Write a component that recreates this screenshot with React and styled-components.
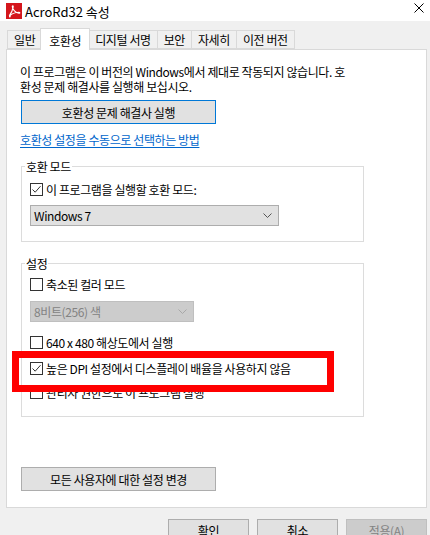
import React from 'react'
import styled, { createGlobalStyle } from 'styled-components'

const GlobalStyle = createGlobalStyle`
    html, body{
        margin: 0;
        padding: 0;
        background: #f0f0f0;
    }
    body{
        font-family: "Noto Sans CJK KR", "Noto Sans", "Liberation Sans", sans-serif;
        font-size: 12px;
        color: #000;
    }
    *{
        box-sizing: border-box;
    }
`

const Window = styled.div`
    position: relative;
    width: 430px;
    height: 535px;
    overflow: hidden;
    background: #f0f0f0;
    letter-spacing: -0.4px;
`

const TitleBar = styled.div`
    height: 21px;
    flex-shrink: 0;
    background: #fff;
    display: flex;
    align-items: center;
    padding: 0 6px;
    .title{
        margin-left: 3px;
        font-size: 13px;
        letter-spacing: 0;
        line-height: 15px;
        margin-top: 1px;
    }
    .close{
        margin-left: auto;
        margin-top: -6px;
    }
`

const Body = styled.div`
    padding: 0 3px 0 6px;
    display: flex;
    flex-direction: column;
    > *{ flex-shrink: 0; }
`

const TabStrip = styled.div`
    margin-top: 7px;
    height: 21px;
    display: flex;
    align-items: flex-end;
    padding-left: 1px;
    position: relative;
    z-index: 1;
`

const Tab = styled.div`
    height: ${p => (p.$active ? '22px' : '19px')};
    margin-bottom: ${p => (p.$active ? '-1px' : '0')};
    margin-left: ${p => (p.$active ? '-2px' : '-1px')};
    margin-right: ${p => (p.$active ? '-1px' : '0')};
    &:first-child{ margin-left: 0; }
    padding: 0 ${p => (p.$active ? '8px' : '6px')};
    padding-top: ${p => (p.$active ? '1px' : '0')};
    background: ${p => (p.$active ? '#fff' : '#f0f0f0')};
    border: 1px solid #d9d9d9;
    border-bottom: ${p => (p.$active ? 'none' : '1px solid #d9d9d9')};
    display: flex;
    align-items: center;
    line-height: 15px;
    white-space: nowrap;
    position: relative;
    z-index: ${p => (p.$active ? 2 : 1)};
`

const Panel = styled.div`
    height: 459px;
    background: #fff;
    border: 1px solid #d9d9d9;
    padding: 14px 13px 16px 13px;
    display: flex;
    flex-direction: column;
    align-items: flex-start;
    > *{ flex-shrink: 0; }
`

const Intro = styled.p`
    margin: 0;
    line-height: 15px;
`

const PushButton = styled.button`
    font: inherit;
    letter-spacing: inherit;
    color: #000;
    width: 195px;
    height: 24px;
    margin-top: ${p => (p.$pushDown ? 'auto' : `${p.$top || 0}px`)};
    margin-left: 1px;
    background: #e1e1e1;
    border: 1px solid ${p => (p.$default ? '#0078d7' : '#adadad')};
    padding: 0;
    line-height: 15px;
`

const HelpLink = styled.a`
    margin-top: 8px;
    line-height: 15px;
    color: #0066cc;
    text-decoration: underline;
    text-underline-offset: 2px;
`

const Group = styled.fieldset`
    margin: ${p => p.$top}px 0 0 1px;
    width: 343px;
    border: 1px solid #dcdcdc;
    padding: 0 8px ${p => p.$bottom}px 8px;
    min-width: 0;
    display: flex;
    flex-direction: column;
    align-items: flex-start;
    legend{
        padding: 0 1px;
        margin-left: -5px;
        line-height: 15px;
    }
`

const CheckRow = styled.label`
    display: flex;
    align-items: center;
    gap: 3px;
    height: 15px;
    line-height: 15px;
    margin-top: ${p => p.$top}px;
    white-space: nowrap;
`

const Box = styled.span`
    width: 13px;
    height: 13px;
    border: 1px solid #333;
    background: #fff;
    display: flex;
    align-items: center;
    justify-content: center;
    flex-shrink: 0;
`

const Select = styled.div`
    width: ${p => p.$width}px;
    height: 21px;
    margin-top: ${p => p.$top}px;
    background: ${p => (p.$disabled ? '#cccccc' : '#e1e1e1')};
    border: 1px solid ${p => (p.$disabled ? '#bfbfbf' : '#adadad')};
    color: ${p => (p.$disabled ? '#838383' : '#000')};
    display: flex;
    align-items: center;
    justify-content: space-between;
    padding: 0 6px 0 3px;
    line-height: 15px;
`

const Footer = styled.div`
    display: flex;
    justify-content: flex-end;
    gap: 8px;
    margin-top: 11px;
`

const DialogButton = styled.button`
    font: inherit;
    letter-spacing: inherit;
    width: 81px;
    height: 23px;
    padding: 0;
    background: ${p => (p.disabled ? '#cccccc' : '#e1e1e1')};
    border: 1px solid ${p => (p.disabled ? '#bfbfbf' : '#adadad')};
    color: ${p => (p.disabled ? '#838383' : '#000')};
    line-height: 15px;
`

const Highlight = styled.div`
    position: absolute;
    left: 12px;
    top: 351px;
    width: 322px;
    height: 41px;
    border: 7px solid #ff0000;
    pointer-events: none;
`

const Check = ({ checked }) => (
    <Box>
        {checked && (
            <svg width="11" height="11" viewBox="0 0 11 11">
                <path d="M1.5 5.5 L4.2 8.2 L9.5 2.2" fill="none" stroke="#333" strokeWidth="1" />
            </svg>
        )}
    </Box>
)

const Chevron = ({ color }) => (
    <svg width="9" height="5" viewBox="0 0 9 5">
        <path d="M0.5 0.5 L4.5 4.5 L8.5 0.5" fill="none" stroke={color} strokeWidth="1" />
    </svg>
)

const AcrobatIcon = () => (
    <svg width="16" height="16" viewBox="0 0 16 16">
        <rect x="0" y="0" width="16" height="16" fill="#d4161c" />
        <path
            d="M3.2 12.8 C5 10.5 6.8 6.5 7.2 3.8 C7.4 2.4 6.2 2.3 6.3 3.8 C6.5 6.4 9.6 9.8 12.8 10.3 C14.2 10.5 14.2 9.2 12.8 9.3 C9.8 9.5 5.3 11.2 3.8 12.9 C3.1 13.7 3.8 14.3 4.6 13.4"
            fill="none"
            stroke="#fff"
            strokeWidth="1.1"
        />
    </svg>
)

const CloseIcon = () => (
    <svg className="close" width="10" height="10" viewBox="0 0 10 10">
        <path d="M0.5 0.5 L9.5 9.5 M9.5 0.5 L0.5 9.5" stroke="#000" strokeWidth="1" />
    </svg>
)

const tabs = ['일반', '호환성', '디지털 서명', '보안', '자세히', '이전 버전']

const App = () => {
    return (
        <>
            <GlobalStyle />
            <Window>
                <TitleBar>
                    <AcrobatIcon />
                    <span className="title">AcroRd32 속성</span>
                    <CloseIcon />
                </TitleBar>
                <Body>
                    <TabStrip>
                        {tabs.map(t => (
                            <Tab key={t} $active={t === '호환성'}>{t}</Tab>
                        ))}
                    </TabStrip>
                    <Panel>
                        <Intro>
                            이 프로그램은 이 버전의 Windows에서 제대로 작동되지 않습니다. 호<br />
                            환성 문제 해결사를 실행해 보십시오.
                        </Intro>
                        <PushButton $default $top={6}>호환성 문제 해결사 실행</PushButton>
                        <HelpLink>호환성 설정을 수동으로 선택하는 방법</HelpLink>

                        <Group $top={12} $bottom={15}>
                            <legend>호환 모드</legend>
                            <CheckRow $top={8}>
                                <Check checked />
                                이 프로그램을 실행할 호환 모드:
                            </CheckRow>
                            <Select $width={249} $top={8}>
                                <span>Windows 7</span>
                                <Chevron color="#555" />
                            </Select>
                        </Group>

                        <Group $top={14} $bottom={16}>
                            <legend>설정</legend>
                            <CheckRow $top={6}>
                                <Check />
                                축소된 컬러 모드
                            </CheckRow>
                            <Select $width={164} $top={9} $disabled>
                                <span>8비트(256) 색</span>
                                <Chevron color="#a8a8a8" />
                            </Select>
                            <CheckRow $top={13}>
                                <Check />
                                640 x 480 해상도에서 실행
                            </CheckRow>
                            <CheckRow $top={11}>
                                <Check checked />
                                높은 DPI 설정에서 디스플레이 배율을 사용하지 않음
                            </CheckRow>
                            <CheckRow $top={9}>
                                <Check />
                                관리자 권한으로 이 프로그램 실행
                            </CheckRow>
                        </Group>

                        <PushButton $pushDown>모든 사용자에 대한 설정 변경</PushButton>
                    </Panel>
                    <Footer>
                        <DialogButton>확인</DialogButton>
                        <DialogButton>취소</DialogButton>
                        <DialogButton disabled>적용(A)</DialogButton>
                    </Footer>
                </Body>
                <Highlight />
            </Window>
        </>
    )
}

export default App
